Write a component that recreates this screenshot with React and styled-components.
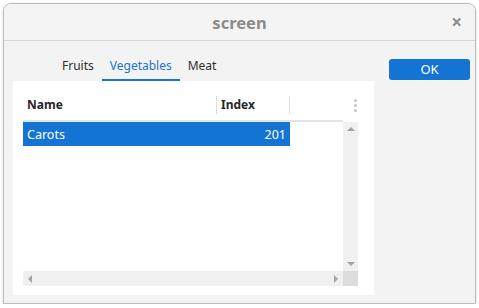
import React, { useState } from 'react';
import styled, { createGlobalStyle } from 'styled-components';

const GlobalStyle = createGlobalStyle`
  html, body {
    margin: 0;
    padding: 0;
    background: #ffffff;
    font-family: "Noto Sans", "Open Sans", sans-serif;
  }
`;

const Window = styled.div`
  box-sizing: border-box;
  margin: 3px 0 0 3px;
  width: 473px;
  height: 301px;
  border: 1px solid #bcbcbc;
  border-radius: 8px 8px 0 0;
  background: #f3f3f3;
  box-shadow: 0 1px 3px rgba(0, 0, 0, 0.15);
  display: flex;
  flex-direction: column;
  overflow: hidden;
`;

const TitleBar = styled.div`
  position: relative;
  height: 36px;
  flex: none;
  display: flex;
  align-items: center;
  justify-content: center;
  background: #f5f4f4;
  border-bottom: 1px solid #d6d6d6;
`;

const Title = styled.span`
  font-size: 16.5px;
  font-weight: bold;
  color: #8b8b8b;
  margin-top: 1px;
`;

const CloseButton = styled.span`
  position: absolute;
  right: 13px;
  top: 8px;
  font-size: 19px;
  font-weight: bold;
  color: #8e8e8e;
  line-height: 20px;
  cursor: pointer;
`;

const Body = styled.div`
  flex: 1;
  display: flex;
  padding: 0 4px 8px 9px;
  gap: 15px;
`;

const MainColumn = styled.div`
  width: 361px;
  display: flex;
  flex-direction: column;
`;

const TabBar = styled.div`
  height: 40px;
  display: flex;
  align-items: flex-end;
  padding-left: 41px;
`;

const Tab = styled.div`
  box-sizing: border-box;
  height: 28px;
  padding: 0 8px;
  font-size: 12px;
  line-height: 26px;
  color: ${({ active }) => (active ? '#1a73d0' : '#2e2e2e')};
  border-bottom: 2px solid ${({ active }) => (active ? '#1a73d0' : 'transparent')};
  cursor: pointer;
`;

const Panel = styled.div`
  flex: 1;
  background: #ffffff;
  padding: 0 16px 9px 10px;
  display: flex;
  flex-direction: column;
`;

const TableFrame = styled.div`
  flex: 1;
  display: grid;
  grid-template-columns: 320px 15px;
  grid-template-rows: 41px 1fr 15px;
`;

const HeaderRow = styled.div`
  display: flex;
  align-items: center;
  padding-top: 9px;
  border-bottom: 2px solid #e4e4e4;
`;

const HeaderCell = styled.div`
  box-sizing: border-box;
  width: ${({ w }) => w}px;
  font-size: 12px;
  font-weight: bold;
  color: #262626;
  padding-left: 4px;
  height: 18px;
  line-height: 18px;
  border-right: ${({ divider }) => (divider ? '1px solid #dcdcdc' : 'none')};
`;

const HeaderCorner = styled.div`
  display: flex;
  flex-direction: column;
  align-items: center;
  justify-content: center;
  gap: 2px;
  padding: 8px 0 0 9px;
`;

const Dot = styled.span`
  width: 3px;
  height: 3px;
  border-radius: 50%;
  background: #c4c4c4;
`;

const Rows = styled.div`
  overflow: hidden;
`;

const Row = styled.div`
  display: flex;
  height: 24px;
  align-items: center;
  width: 267px;
  background: ${({ selected }) => (selected ? '#1474d3' : 'transparent')};
  color: ${({ selected }) => (selected ? '#ffffff' : '#262626')};
  font-size: 12.5px;
`;

const Cell = styled.div`
  box-sizing: border-box;
  width: ${({ w }) => w}px;
  padding: 0 4px;
  text-align: ${({ align }) => align || 'left'};
`;

const ScrollTrack = styled.div`
  background: #f0f0f0;
  display: flex;
  flex-direction: ${({ vertical }) => (vertical ? 'column' : 'row')};
  justify-content: space-between;
  align-items: center;
  padding: ${({ vertical }) => (vertical ? '5px 0' : '0 5px')};
`;

const Corner = styled.div`
  background: #dcdcdc;
`;

const Arrow = styled.span`
  width: 0;
  height: 0;
  border: 4px solid transparent;
  ${({ dir }) => dir === 'up' && 'border-bottom: 4px solid #a3a3a3; border-top-width: 0;'}
  ${({ dir }) => dir === 'down' && 'border-top: 4px solid #a3a3a3; border-bottom-width: 0;'}
  ${({ dir }) => dir === 'left' && 'border-right: 4px solid #a3a3a3; border-left-width: 0;'}
  ${({ dir }) => dir === 'right' && 'border-left: 4px solid #a3a3a3; border-right-width: 0;'}
`;

const SideColumn = styled.div`
  flex: 1;
  padding-top: 16px;
`;

const OkButton = styled.button`
  width: 81px;
  height: 21px;
  border: none;
  border-radius: 3px;
  background: #1474d3;
  color: #ffffff;
  font-family: "Noto Sans", "Open Sans", sans-serif;
  font-size: 13px;
  line-height: 21px;
  padding: 0;
  cursor: pointer;
`;

const tabs = ['Fruits', 'Vegetables', 'Meat'];
const rows = [{ name: 'Carots', index: 201 }];

export default function App() {
  const [tab, setTab] = useState('Vegetables');

  return (
    <>
      <GlobalStyle />
      <Window>
        <TitleBar>
          <Title>screen</Title>
          <CloseButton>×</CloseButton>
        </TitleBar>
        <Body>
          <MainColumn>
            <TabBar>
              {tabs.map((t) => (
                <Tab key={t} active={t === tab} onClick={() => setTab(t)}>
                  {t}
                </Tab>
              ))}
            </TabBar>
            <Panel>
              <TableFrame>
                <HeaderRow>
                  <HeaderCell w={194} divider>Name</HeaderCell>
                  <HeaderCell w={73} divider>Index</HeaderCell>
                </HeaderRow>
                <HeaderCorner>
                  <Dot />
                  <Dot />
                  <Dot />
                </HeaderCorner>
                <Rows>
                  {rows.map((r) => (
                    <Row key={r.name} selected>
                      <Cell w={194}>{r.name}</Cell>
                      <Cell w={73} align="right">{r.index}</Cell>
                    </Row>
                  ))}
                </Rows>
                <ScrollTrack vertical>
                  <Arrow dir="up" />
                  <Arrow dir="down" />
                </ScrollTrack>
                <ScrollTrack>
                  <Arrow dir="left" />
                  <Arrow dir="right" />
                </ScrollTrack>
                <Corner />
              </TableFrame>
            </Panel>
          </MainColumn>
          <SideColumn>
            <OkButton>OK</OkButton>
          </SideColumn>
        </Body>
      </Window>
    </>
  );
}
